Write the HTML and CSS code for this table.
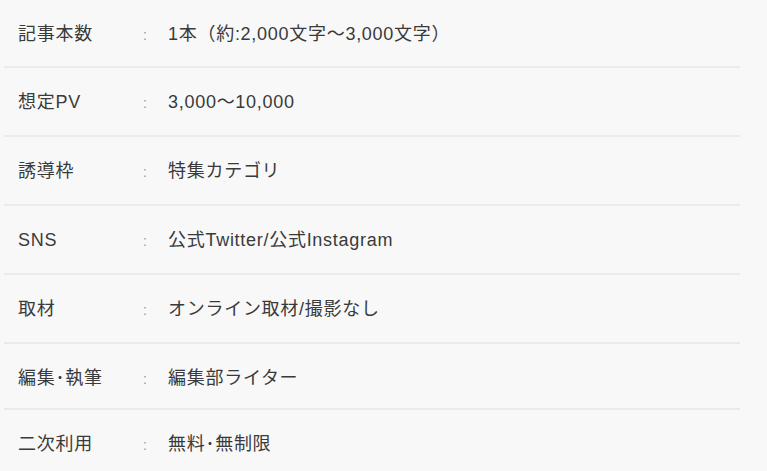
FILE: index.html
```html
<!DOCTYPE html>
<html lang="ja">
<head>
  <meta charset="UTF-8">
  <meta name="viewport" content="width=device-width, initial-scale=1">
  <title>掲載プラン</title>
  <link rel="stylesheet" href="styles.css">
</head>
<body>
  <main class="plan">
    <dl class="spec">
      <div class="row"><dt>記事本数</dt><dd>1本（約:2,000文字〜3,000文字）</dd></div>
      <div class="row"><dt>想定PV</dt><dd>3,000〜10,000</dd></div>
      <div class="row"><dt>誘導枠</dt><dd>特集カテゴリ</dd></div>
      <div class="row"><dt>SNS</dt><dd>公式Twitter/公式Instagram</dd></div>
      <div class="row"><dt>取材</dt><dd>オンライン取材/撮影なし</dd></div>
      <div class="row short"><dt>編集･執筆</dt><dd>編集部ライター</dd></div>
      <div class="row"><dt>二次利用</dt><dd>無料･無制限</dd></div>
    </dl>
  </main>
</body>
</html>
```

FILE: styles.css
```css
* { margin: 0; padding: 0; box-sizing: border-box; }
body {
  background: #f8f8f8; color: #3a3a3a;
  font-family: 'Liberation Sans', 'Noto Sans CJK JP', sans-serif;
  font-size: 18px; letter-spacing: .04em;
}
.plan { width: 740px; padding-left: 4px; }
.row {
  display: flex; align-items: baseline;
  height: 69px; padding: 19px 14px 0;
  border-bottom: 2px solid #ebebeb;
}
.row:first-child { height: 68px; padding-top: 19px; }
.row.short { height: 66px; }
.row:last-child { border-bottom: none; }
dt { width: 125px; }
dd::before {
  content: ':'; color: #9a9a9a; font-size: 14px;
  display: inline-block; width: 25px;
}
```
